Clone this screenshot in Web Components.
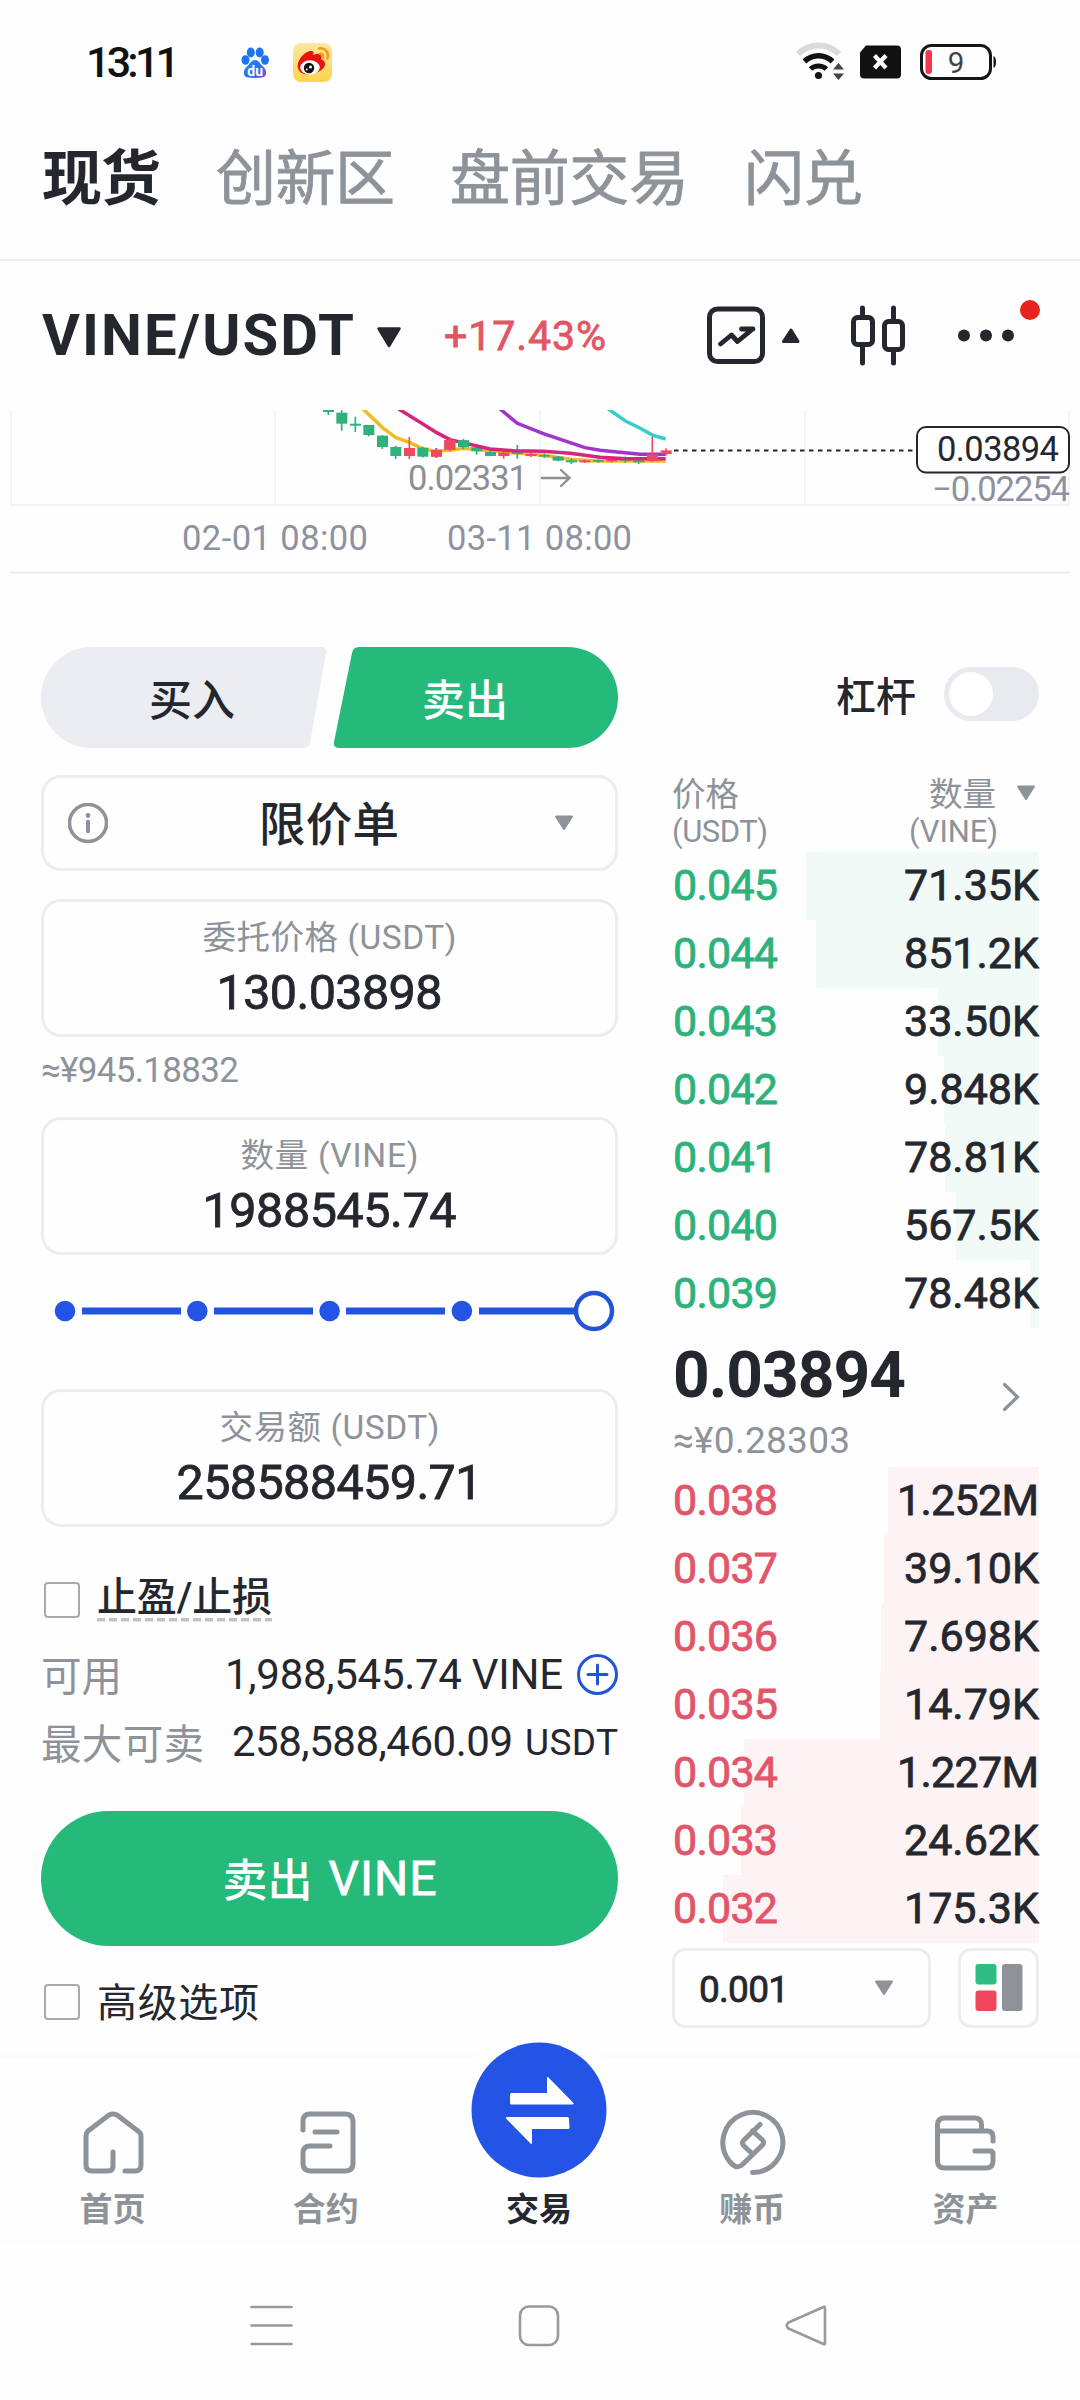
<!DOCTYPE html>
<html lang="zh-CN">
<head>
<meta charset="utf-8">
<title>VINE/USDT</title>
<style>
html,body{margin:0;padding:0;background:#fefefe}
body{width:1080px;height:2400px;overflow:hidden;font-family:Roboto,"Noto Sans CJK SC",sans-serif;color:#25272e}
</style>
</head>
<body>
<trade-app></trade-app>
<script>
const define = (name, html, setup) => customElements.define(name, class extends HTMLElement {
  connectedCallback() {
    if (this.shadowRoot) return;
    const root = this.attachShadow({ mode: 'open' });
    const t = document.createElement('template');
    t.innerHTML = typeof html === 'function' ? html(this) : html;
    root.append(t.content.cloneNode(true));
    if (setup) setup(this, root);
  }
});

/* Single-line label: s = size, w = width to track out to, b = weight, c = colour.
   Weight 450 is the regular cut with a hairline stroke. */
define('x-t', `<style>:host{display:block;flex:none;line-height:1;white-space:nowrap}:host([b="450"]){-webkit-text-stroke:.8px currentColor}span{display:inline-block;line-height:1;vertical-align:top}</style><span><slot></slot></span>`,
  (el, root) => {
    const s = +el.getAttribute('s');
    const b = el.getAttribute('b') || 400;
    el.style.fontSize = s + 'px';
    el.style.height = s + 'px';
    el.style.fontWeight = b == 450 ? 400 : b;
    if (el.getAttribute('c')) el.style.color = el.getAttribute('c');
    const w = +el.getAttribute('w');
    if (!w) return;
    el.style.width = w + 'px';
    const n = el.textContent.length;
    const nat = root.querySelector('span').getBoundingClientRect().width;
    if (n > 1) el.style.letterSpacing = ((w - nat) / (n - 1)).toFixed(3) + 'px';
  });

define('status-bar', `<style>
:host{display:flex;align-items:center;height:124px;padding:0 84px 0 86px;box-sizing:border-box}
svg{display:block;flex:none}.l{margin-left:56px}.r{margin-left:auto}
</style>
<x-t s="43" w="94" b="500" c="#111">13:11</x-t>
<svg class="l" width="100" height="60" viewBox="236 32 100 60">
 <defs><linearGradient id="b" x1="0" y1="0" x2="1" y2="1"><stop offset="0" stop-color="#1b8cf5"/><stop offset=".6" stop-color="#2f6df0"/><stop offset="1" stop-color="#8a4be0"/></linearGradient>
 <linearGradient id="y" x1="0" y1="0" x2="0" y2="1"><stop offset="0" stop-color="#fbe6a4"/><stop offset="1" stop-color="#fdd44c"/></linearGradient></defs>
 <g fill="#1d74f0"><ellipse cx="245.500" cy="60" rx="4" ry="4.800"/><ellipse cx="250.800" cy="52.500" rx="4" ry="5"/><ellipse cx="259.700" cy="52.500" rx="4" ry="5"/><ellipse cx="265" cy="60" rx="4" ry="4.800"/></g>
 <path fill="url(#b)" d="M255 60c-4 0-5 4-8.500 7-4 3.500-3.500 10 1.500 10.500 4 .5 10 .5 14 0 5-.5 5.500-7 1.500-10.500-3.500-3-4.500-7-8.500-7z"/>
 <text x="255.200" y="75.500" font-size="14" font-weight="700" fill="#fff" text-anchor="middle">du</text>
 <rect x="293" y="43" width="39" height="39" rx="8" fill="url(#y)"/>
 <path d="M298 68c-2-7 7-18 14-17 3 1 1 4 1 4s6-3 8 0c1 2 0 4 0 4s5 2 4 6c-2 9-25 14-27 3z" fill="#e8150f"/>
 <ellipse cx="310" cy="67.500" rx="9.800" ry="7.200" fill="#fff"/><circle cx="309" cy="68" r="5.200" fill="#111"/><circle cx="310.500" cy="67" r="1.500" fill="#fff"/><circle cx="306.800" cy="69.500" r="1" fill="#fff"/>
 <path d="M319 48.500c6-1.500 10 4 8.500 10M320 54c2.500-.5 3.500 1.500 3 3.500" fill="none" stroke="#f59a1c" stroke-width="2.600" stroke-linecap="round"/>
</svg>
<svg class="r" width="206" height="50" viewBox="790 37 206 50">
 <g fill="none">
  <path d="M798 54a29 29 0 0 1 41 0" stroke="#dadada" stroke-width="6"/>
  <path d="M804.500 61.500a20 20 0 0 1 28 0" stroke="#111" stroke-width="5.500"/>
  <path d="M810.500 69a12 12 0 0 1 16 0" stroke="#111" stroke-width="5"/>
 </g>
 <circle cx="818.500" cy="75.500" r="3.600" fill="#111"/>
 <path d="M833 69.500l5.500-6.500 5.500 6.500zM833 73.500h11l-5.500 6.500z" fill="#444"/>
 <path d="M866 45.500h31a4 4 0 0 1 4 4v25a4 4 0 0 1-4 4h-33a4 4 0 0 1-4-4v-22z" fill="#111"/>
 <path d="M874.500 55.500l11.500 12.500M886 55.500l-11.500 12.500" stroke="#fff" stroke-width="4.200"/>
 <rect x="921.500" y="45.500" width="69" height="33" rx="10" fill="none" stroke="#151515" stroke-width="3"/>
 <rect x="925.500" y="50" width="6.500" height="24" rx="3" fill="#f0374b"/>
 <path d="M993.500 56q2.500 1 2.500 6t-2.500 6z" fill="#151515"/>
 <text x="956" y="72.500" font-size="29.500" text-anchor="middle" fill="#444">9</text>
</svg>`);

define('market-tabs', `<style>
:host{display:flex;gap:55px;height:137px;box-sizing:border-box;padding:26px 0 0 42px;border-bottom:2px solid #eceeef}
</style>
<x-t s="60" w="119" b="700" c="#25272e">现货</x-t><x-t s="60" w="179" b="450" c="#8e9399">创新区</x-t><x-t s="60" w="239" b="450" c="#8e9399">盘前交易</x-t><x-t s="60" w="119" b="450" c="#8e9399">闪兑</x-t>`);

define('pair-header', `<style>
:host{display:flex;align-items:center;height:148px;padding-left:42px;box-sizing:border-box}
svg{display:block;flex:none}.tri{margin:5px 42px 0 22px}.ic{margin-left:95px}.pct{margin-top:3px}
</style>
<x-t s="58" w="312" b="700">VINE/USDT</x-t>
<svg class="tri" width="26" height="22"><path d="M2.500 1.500h21L13 19z" fill="#25272e" stroke="#25272e" stroke-width="2.500" stroke-linejoin="round"/></svg>
<x-t class="pct" s="41" w="162" b="450" c="#e25563">+17.43%</x-t>
<svg class="ic" width="350" height="80" viewBox="701 295 350 80" fill="none" stroke="#25272e" stroke-width="5" stroke-linecap="round" stroke-linejoin="round">
 <rect x="709.500" y="309" width="53" height="52.500" rx="8"/>
 <path d="M720.500 344l11-9 6 6.500 15-12.300M741.500 329h11.500" stroke-width="4.800"/>
 <path d="M791 330l7 11.500h-14.500z" fill="#25272e" stroke-width="3"/>
 <path d="M862.500 308v8m0 31v16M893.500 308v11m0 33v11"/>
 <rect x="853.500" y="317.500" width="19" height="27" rx="4"/><rect x="884.500" y="321.500" width="18" height="28" rx="4"/>
 <g fill="#25272e" stroke="none"><circle cx="964" cy="335.500" r="6"/><circle cx="986" cy="335.500" r="6"/><circle cx="1008" cy="335.500" r="6"/></g>
 <circle cx="1030" cy="310" r="10" fill="#e6231d" stroke="none"/>
</svg>`);

define('mini-chart', () => {
  const G = '#2db27c', R = '#ee4a5e';
  /* x, body top, body bottom, wick top, wick bottom, colour */
  const c = [[145,60,66,60,75,G],[185,68,101,60,122,G],[226,101,107,80,126,G],[266,105,135,105,139,G],[307,137,171,135,177,G],[347,171,198,167,207,G],[388,174,198,141,207,R],[428,173,200,170,203,G],[469,180,200,174,204,R],[509,150,179,143,182,R],[550,151,171,148,177,G],[590,172,184,168,194,G],[631,186,198,183,198,G],[671,188,198,183,206,R],[712,186,192,165,206,G],[753,192,198,189,201,R],[793,195,200,190,204,G],[834,200,212,198,214,G],[874,211,217,205,222,G],[914,211,217,209,219,R],[955,210,215,208,218,G],[995,205,214,203,217,R],[1036,204,212,200,218,G],[1076,211,217,208,222,G],[1117,193,213,141,215,R],[1158,181,192,175,197,R]];
  const bar = ([x,a,b,t,u,k]) => `<rect x="${x-16}" y="${a}" width="33" height="${b-a}" fill="${k}"/><rect x="${x-2.5}" y="${t}" width="5" height="${u-t}" fill="${k}"/>`;
  return `<style>:host{display:block;height:165px}svg{display:block}</style>
<svg width="1080" height="165" viewBox="0 409 1080 165">
 <g fill="#f3f4f5"><rect x="10" y="410" width="2" height="96"/><rect x="274" y="410" width="2" height="96"/><rect x="539" y="410" width="2" height="96"/><rect x="804" y="410" width="2" height="96"/><rect x="1068" y="410" width="2" height="96"/><rect x="10" y="504" width="1060" height="2"/></g>
 <rect x="10" y="571.500" width="1060" height="2" fill="#e9ebed"/>
 <svg x="0" y="410" width="1080" height="96" viewBox="0 410 1080 96"><g transform="translate(280 390) scale(.33333)" fill="none" stroke-width="10.500">
  <path d="M249 57L310 115 348 143 390 158 430 177 465 184 510 181 550 175 600 179 700 188 790 196 870 208 950 213 1157 213" stroke="#f0bb25"/>
  <path d="M660 57L712 100 790 131 915 173 960 181 1080 193 1157 193" stroke="#a034cc"/>
  <path d="M985 57L1038 94 1079 114 1119 136 1157 147" stroke="#35cfca"/>
  ${c.slice(0, -2).map(bar).join('')}
  <path d="M356 57L430 103 470 128 510 149 630 177 700 182 790 184 870 190 960 202 1040 206 1157 206" stroke="#d4277c"/>
  ${c.slice(8, 11).concat(c.slice(-2)).map(bar).join('')}
 </g></svg>
 <path d="M674 450.500H916" stroke="#25272e" stroke-width="2" stroke-dasharray="4.500 4.500"/>
 <rect x="917" y="427" width="152" height="45.500" rx="9" fill="#fff" stroke="#25272e" stroke-width="2"/>
 <path d="M542 478h27m-8-8l8.500 8-8.500 8" fill="none" stroke="#8c8f93" stroke-width="2.400" stroke-linecap="round"/>
 <text x="937" y="461" font-size="34.500" textLength="122" fill="#25272e">0.03894</text>
 <g font-size="34.500" fill="#8e92a0"><text x="932" y="501" textLength="138">−0.02254</text>
 <text x="408" y="490" textLength="120" fill="#8c8f93">0.02331</text>
 <text x="182" y="550" textLength="186">02-01 08:00</text><text x="447" y="550" textLength="185">03-11 08:00</text></g>
</svg>`;
});

define('side-switch', `<style>
:host{display:grid;height:101px}svg,div{grid-area:1/1}svg{display:block}
div{display:flex;padding:33px 0 0 108px;gap:187px;z-index:1;width:312px}
</style>
<svg width="577" height="101"><path d="M50.500 0H279q7 0 6 6L269 96q-1 5-7 5H50.500a50.500 50.500 0 0 1 0-101z" fill="#ebedf1"/><path d="M526.500 0H318q-6 0-7 6L293 95q-1 6 5 6H526.500a50.500 50.500 0 0 0 0-101z" fill="#26ba7a"/></svg>
<div><x-t s="43" w="86" b="500">买入</x-t><x-t s="43" w="86" b="500" c="#fff">卖出</x-t></div>`);

define('tri-down', `<style>:host{display:block;width:20px;height:16px;flex:none}svg{display:block}</style><svg width="20" height="16"><path d="M2 1.500h16L10 14z" fill="#8e9399" stroke="#8e9399" stroke-width="2" stroke-linejoin="round"/></svg>`);

define('order-type', el => `<style>
:host{display:flex;align-items:center;height:96px;margin-top:27px;border:3px solid #ebedee;border-radius:20px;box-sizing:border-box;padding:0 41px 0 24px;justify-content:space-between}
svg{display:block}x-t{margin:5px 0 0 -4px}
</style>
<svg width="40" height="40" viewBox="0 0 40 40"><circle cx="20" cy="20" r="18.500" fill="none" stroke="#8e9399" stroke-width="3.500"/><circle cx="20" cy="12.500" r="2.400" fill="#8e9399"/><path d="M20 18.500v10" stroke="#8e9399" stroke-width="4" stroke-linecap="round"/></svg>
<x-t s="46.500" w="140" b="500">${el.getAttribute('label')}</x-t>
<tri-down></tri-down>`);

define('amount-field', el => `<style>
:host{display:flex;flex-direction:column;align-items:center;gap:14px;height:138px;border:3px solid #ebedee;border-radius:20px;box-sizing:border-box;padding-top:19px}
</style>
<x-t s="33.500" w="${el.getAttribute('lw')}" c="#8e9399">${el.getAttribute('label')}</x-t>
<x-t s="48.500" w="${el.getAttribute('vw')}" b="450">${el.getAttribute('value')}</x-t>`);

define('amount-slider', `<style>:host{display:block;height:42px;margin-top:35px}svg{display:block}</style>
<svg width="577" height="42" viewBox="41 1290 577 42"><path d="M82 1311h99M214 1311h99M346 1311h99M479 1311h99" stroke="#2354e0" stroke-width="7"/><g fill="#2354e6"><circle cx="65" cy="1311" r="10.300"/><circle cx="197.300" cy="1311" r="10.300"/><circle cx="329.600" cy="1311" r="10.300"/><circle cx="461.900" cy="1311" r="10.300"/></g><circle cx="594" cy="1311" r="18" fill="#fff" stroke="#2354d8" stroke-width="4.500"/></svg>`);

define('check-row', el => `<style>
:host{display:flex;align-items:center;height:46px;padding-left:2.500px;gap:17.500px}
i{box-sizing:border-box;width:36px;height:36px;border:2.500px solid #a8a9ab;border-radius:4px}
div{display:flex;height:46px;box-sizing:border-box;padding-top:5px}
div.u{padding-top:1px;background:repeating-linear-gradient(90deg,#c0c2c5 0 8px,transparent 8px 12px) 0 41px/100% 3.500px no-repeat}
</style><i></i><div class="${el.hasAttribute('dashed') ? 'u' : ''}"><x-t s="40" w="${el.getAttribute('w')}" b="${el.getAttribute('b') || 400}">${el.getAttribute('label')}</x-t></div>`);

define('balance-row', el => `<style>
:host{display:flex;align-items:center;height:46px}
x-t:nth-of-type(2){margin-left:auto}svg{display:block;margin-left:14px}x-t.u{margin:1px 0 0 12px}
x-t:first-of-type{margin-top:6px}
</style><x-t s="40.500" w="${el.getAttribute('lw')}" c="#8e9399">${el.getAttribute('label')}</x-t>
<x-t s="42" w="${el.getAttribute('vw')}">${el.getAttribute('value')}</x-t>
${el.hasAttribute('unit') ? `<x-t class="u" s="37" w="93">${el.getAttribute('unit')}</x-t>` : `<svg width="41" height="41"><circle cx="20.500" cy="20.500" r="19" fill="none" stroke="#2354d8" stroke-width="3"/><path d="M20.500 11v19M11 20.500h19" stroke="#2354d8" stroke-width="3" stroke-linecap="round"/></svg>`}`);

define('submit-button', `<style>
:host{display:flex;align-items:center;justify-content:center;height:135px;border-radius:68px;background:#26ba7a;margin-top:46px;gap:16px}
.c{margin-top:6px}
</style><x-t class="c" s="45" w="90" b="500" c="#fff">卖出</x-t><x-t s="48" w="108" b="450" c="#fff">VINE</x-t>`);

define('order-form', `<style>:host{display:flex;flex-direction:column;width:577px}</style>
<side-switch></side-switch>
<order-type label="限价单"></order-type>
<amount-field style="margin-top:28px" label="委托价格 (USDT)" lw="254" value="130.03898" vw="226"></amount-field>
<x-t style="margin-top:15.500px" s="35" w="198" c="#8e9399">≈¥945.18832</x-t>
<amount-field style="margin-top:29.500px" label="数量 (VINE)" lw="178" value="1988545.74" vw="254"></amount-field>
<amount-slider></amount-slider>
<amount-field style="margin-top:57px" label="交易额 (USDT)" lw="220" value="258588459.71" vw="306"></amount-field>
<check-row style="margin-top:50px" dashed label="止盈/止损" w="175" b="500"></check-row>
<balance-row style="margin-top:28.500px" label="可用" lw="81" value="1,988,545.74 VINE" vw="338"></balance-row>
<balance-row style="margin-top:21.500px" label="最大可卖" lw="163" value="258,588,460.09" vw="281" unit="USDT"></balance-row>
<submit-button></submit-button>
<check-row style="margin-top:32.500px" label="高级选项" w="162"></check-row>`);

define('book-row', el => `<style>
:host{display:flex;justify-content:space-between;height:68px;box-sizing:border-box;padding:12px 0 0 1px;
background:linear-gradient(var(--bar),var(--bar)) right/${el.getAttribute('bar')}px 100% no-repeat}
</style><x-t s="43" w="105" b="450" c="var(--ink)">${el.getAttribute('p')}</x-t><x-t s="43" w="${el.getAttribute('q').endsWith('M') ? 142 : 135}" b="450">${el.getAttribute('q')}</x-t>`);

define('order-book', () => {
  const rows = (list) => list.map(([p, q, b]) => `<book-row p="${p}" q="${q}" bar="${b}"></book-row>`).join('');
  return `<style>
:host{display:flex;flex-direction:column;width:367px}
.lev{display:flex;align-items:center;justify-content:flex-end;height:54px;margin-top:20px;gap:28px}
.tog{box-sizing:border-box;width:95px;height:54px;border-radius:27px;background:#e9eaf0;padding:5px}
.tog i{display:block;width:44px;height:44px;border-radius:50%;background:#fff}
.lev x-t{margin-top:7px}
.head{display:flex;justify-content:space-between;margin-top:56.500px;height:74.500px}
.head div{display:flex;flex-direction:column;gap:5px}.head .q{align-items:flex-end;margin-right:41px}
.head div.qr{flex-direction:row;align-items:flex-start;gap:0}
.qr tri-down{margin:7px -38px 0 20px}
.buy{--ink:#2db27c;--bar:#f1faf7}.sell{--ink:#e2556a;--bar:#fdf3f5}
.mid{display:flex;justify-content:space-between;align-items:center;height:138.500px}
.mid svg{display:block;margin-right:19px}
.mid div{display:flex;flex-direction:column;gap:14px;padding:8px 0 0 1px}
.foot{display:flex;justify-content:space-between;margin-top:5.500px}
.box{box-sizing:border-box;border:3px solid #ebedee;border-radius:13px;height:80px;display:flex;align-items:center;justify-content:space-between}
.step{width:259px;padding:0 34px 0 24px}.lay{width:81px;justify-content:center}
.step x-t{margin-top:2px}
.foot svg{display:block}
</style>
<div class="lev"><x-t s="40" w="80" b="500">杠杆</x-t><div class="tog"><i></i></div></div>
<div class="head"><div><x-t s="33.500" w="67" c="#8e9399">价格</x-t><x-t s="31" w="96" c="#8e9399">(USDT)</x-t></div>
<div class="q"><div class="qr"><x-t s="33.500" w="67" c="#8e9399">数量</x-t><tri-down></tri-down></div><x-t s="31" w="89" c="#8e9399">(VINE)</x-t></div></div>
<div class="buy">${rows([['0.045','71.35K',233],['0.044','851.2K',223],['0.043','33.50K',101],['0.042','9.848K',95],['0.041','78.81K',94],['0.040','567.5K',83],['0.039','78.48K',9]])}</div>
<div class="mid"><div><x-t s="64" w="233" b="700">0.03894</x-t><x-t s="37" w="177" c="#8e9399">≈¥0.28303</x-t></div>
<svg width="18" height="30"><path d="M2.500 2.500L15.500 15 2.500 27.500" fill="none" stroke="#8e9399" stroke-width="3.200" stroke-linecap="round"/></svg></div>
<div class="sell">${rows([['0.038','1.252M',151],['0.037','39.10K',155],['0.036','7.698K',158],['0.035','14.79K',159],['0.034','1.227M',295],['0.033','24.62K',298],['0.032','175.3K',316]])}</div>
<div class="foot"><div class="box step"><x-t s="37" w="90" b="450">0.001</x-t><tri-down></tri-down></div>
<div class="box lay"><svg width="48" height="48"><rect x=".5" y="0" width="21" height="20.500" rx="3" fill="#2fbd85"/><rect x=".5" y="26.500" width="21" height="20.500" rx="3" fill="#f0475c"/><rect x="27" y="0" width="20.500" height="47" rx="3" fill="#8e9399"/></svg></div></div>`;
});

define('bottom-nav', `<style>
:host{display:flex;height:182px;padding:0 8px 0 6px;box-sizing:border-box;box-shadow:0 -1px 6px rgba(0,0,0,.03);background:#fefefe}
div{display:flex;flex-direction:column;align-items:center;justify-content:flex-end;flex:1 1 0;min-width:0;padding-bottom:14px;box-sizing:border-box;gap:11.500px}
svg{display:block;flex:none;fill:none;stroke:#8e9399;stroke-width:5;stroke-linecap:round;stroke-linejoin:round}
</style>
<div><svg width="80" height="80" viewBox="73 2102 80 80"><path d="M113 2152v14q0 5-5 5H92q-6 0-6-6V2136q0-3 2-5l21-16q4-2 8 0l21 16q3 2 3 5v29q0 6-6 6h-10"/></svg><x-t s="33" w="66" b="700" c="#8e9399">首页</x-t></div>
<div><svg width="80" height="80" viewBox="286 2102 80 80"><path d="M303 2130v-9q0-7 7-7h35q8 0 8 8v41q0 8-8 8h-34q-8 0-8-8v-10q0-7 7-7h20M315 2132h22"/></svg><x-t s="33" w="66" b="700" c="#8e9399">合约</x-t></div>
<div><svg width="160" height="150" viewBox="459 2031 160 150"><path d="M459 2059q22-2 34-14a80 80 0 0 1 92 0q12 12 34 14v40H459z" fill="#fefefe" stroke="none"/><circle cx="539" cy="2109" r="67.500" fill="#2354e6" stroke="none"/><path d="M510 2093.500q0-1.500 1.500-1.500H547v-15q0-2 1.500-.500l24.500 25q2 2-1 2H511.500q-1.500 0-1.500-1.500zM569 2117.500q0-1.500-1.500-1.500H507q-2 0-.500 2l24 24.500q1.500 1.500 1.500-.500v-14h36q1.500 0 1.500-1.500z" fill="#fff" stroke="none"/></svg><x-t s="33" w="66" b="700" c="#25272e">交易</x-t></div>
<div><svg width="80" height="80" viewBox="711 2102 80 80"><path d="M751.500 2172.500A30 30 0 1 0 727.500 2160q3.500 5 7 6.500 4 1 7-2L761.500 2145q2-2.500 0-5L751.500 2131M759 2124.500L742.500 2140.500q-2 2.500 0 5L751.500 2154"/></svg><x-t s="33" w="66" b="700" c="#8e9399">赚币</x-t></div>
<div><svg width="80" height="80" viewBox="926 2102 80 80"><path d="M938.500 2131h50q5.500 0 5.500 6v4M938.500 2131v-6q0-7 7-7h30q7 0 7 7v5M938.500 2131v30q0 7 7 7H987q7 0 7-7v-7q0-3-3-3h-15"/></svg><x-t s="33" w="66" b="700" c="#8e9399">资产</x-t></div>`);

define('system-nav', `<style>
:host{display:flex;height:160px;padding:65px 253px 0 249px;box-sizing:border-box;justify-content:space-between}
svg{display:block;fill:none;stroke:#9a9a9a;stroke-width:2.600;stroke-linecap:round;stroke-linejoin:round}
</style>
<svg width="44" height="42"><path d="M2.500 2h40M2.500 20.500h40M2.500 39h40"/></svg>
<svg width="42" height="42"><rect x="2" y="1.500" width="38" height="38.500" rx="9"/></svg>
<svg width="42" height="42"><path d="M38.500 2Q40 1 40 3V38q0 2-1.500 1L3.500 23.500Q0 20.500 3.500 17.500z"/></svg>`);

define('trade-app', `<style>
:host{display:flex;flex-direction:column;width:1080px;height:2400px;background:#fefefe}
main{display:flex;gap:54px;padding:73px 41px 0 41px;height:1484px;box-sizing:border-box}
</style>
<status-bar></status-bar><market-tabs></market-tabs><pair-header></pair-header><mini-chart></mini-chart>
<main><order-form></order-form><order-book></order-book></main>
<bottom-nav></bottom-nav><system-nav></system-nav>`);
</script>
</body>
</html>
